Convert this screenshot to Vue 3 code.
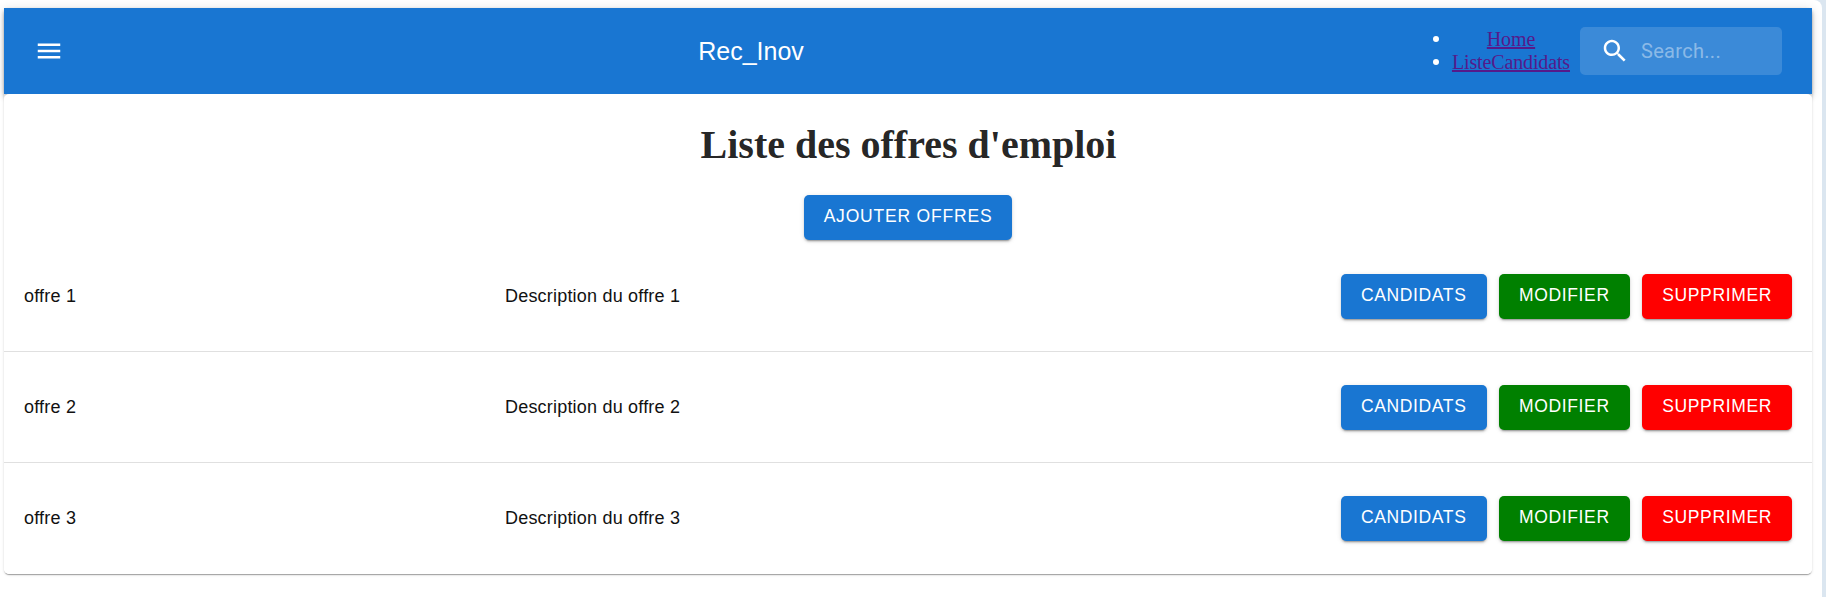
<script setup>
const offers = [1, 2, 3]
</script>

<template>
  <div class="page">
    <div class="paper">
      <header class="bar">
        <svg class="menu" viewBox="0 0 24 24"><path fill="#fff" d="M3 18h18v-2H3v2zm0-5h18v-2H3v2zm0-7v2h18V6H3z" /></svg>
        <div class="title">Rec_Inov</div>
        <ul class="links">
          <li><a href="#">Home</a></li>
          <li><a href="#">ListeCandidats</a></li>
        </ul>
        <div class="search">
          <svg class="glass" viewBox="0 0 24 24"><path fill="#fff" d="M15.5 14h-.79l-.28-.27C15.41 12.59 16 11.11 16 9.5 16 5.91 13.09 3 9.5 3S3 5.91 3 9.5 5.91 16 9.5 16c1.61 0 3.09-.59 4.23-1.57l.27.28v.79l5 4.99L20.49 19l-4.99-5zm-6 0C7.01 14 5 11.99 5 9.5S7.01 5 9.5 5 14 7.01 14 9.5 11.99 14 9.5 14z" /></svg>
          <span class="placeholder">Search...</span>
        </div>
      </header>
      <main class="content">
        <h1>Liste des offres d'emploi</h1>
        <div class="add"><button class="btn blue add-btn">Ajouter offres</button></div>
        <div class="table">
          <div v-for="n in offers" :key="n" class="row">
            <div>offre {{ n }}</div>
            <div>Description du offre {{ n }}</div>
            <div class="actions">
              <button class="btn blue">Candidats</button>
              <button class="btn green">Modifier</button>
              <button class="btn red">Supprimer</button>
            </div>
          </div>
        </div>
      </main>
    </div>
  </div>
</template>

<style>
html, body { margin: 0; background: #dbe6f0; overflow: hidden; }
</style>

<style scoped>
.page {
  width: 1822px;
  height: 597px;
  box-sizing: border-box;
  padding: 8px 10px 0 4px;
  background: #fff;
  border-top-right-radius: 8px;
  font-family: "Liberation Sans", Arial, sans-serif;
}
.paper {
  height: 566px;
  background: #fff;
  border-radius: 5px;
  box-shadow: 0 2px 1px -1px rgba(0,0,0,.2), 0 1px 1px 0 rgba(0,0,0,.14), 0 1px 3px 0 rgba(0,0,0,.12);
}
.bar {
  height: 86px;
  background: #1976d2;
  color: #fff;
  display: flex;
  align-items: center;
  padding: 0 30px;
  box-shadow: 0 2px 4px -1px rgba(0,0,0,.2), 0 4px 5px 0 rgba(0,0,0,.14), 0 1px 10px 0 rgba(0,0,0,.12);
}
.menu { width: 30px; height: 30px; flex: none; }
.title { flex: 1; text-align: center; font-size: 25px; line-height: 1.6; padding-left: 36px; }
.links {
  list-style: none;
  margin: 0 10px 0 0;
  padding: 0 0 0 50px;
  font-family: "Liberation Serif", serif;
  font-size: 20px;
  line-height: 23px;
  letter-spacing: -.14px;
  text-align: center;
}
.links li { position: relative; }
.links li::before {
  content: "";
  position: absolute;
  left: -19px;
  top: 8px;
  width: 6px;
  height: 6px;
  border-radius: 50%;
  background: #fff;
}
.links a { color: #551a8b; }
.search {
  width: 202px;
  height: 48px;
  box-sizing: border-box;
  border-radius: 5px;
  background: rgba(255,255,255,.15);
  display: flex;
  align-items: center;
  padding-left: 20px;
}
.glass { width: 30px; height: 30px; flex: none; }
.placeholder {
  margin-left: 11px;
  font-family: Roboto, sans-serif;
  font-size: 20px;
  letter-spacing: .3px;
  color: rgba(255,255,255,.42);
}
.content {
  position: relative;
  height: 480px;
  background: #fff;
  border-radius: 5px;
}
h1 {
  margin: 0;
  padding: 28px 0 0 1px;
  height: 73px;
  font-family: "Liberation Serif", serif;
  font-size: 40px;
  line-height: 46px;
  font-weight: 700;
  text-align: center;
  color: rgba(0,0,0,.87);
}
.add { display: flex; justify-content: center; margin-bottom: 1px; }
.btn {
  height: 45px;
  border: 0;
  border-radius: 5px;
  padding: 0 20px 2px;
  color: #fff;
  font-family: "Liberation Sans", Arial, sans-serif;
  font-size: 17.5px;
  font-weight: 500;
  letter-spacing: .64px;
  text-transform: uppercase;
  box-shadow: 0 3px 1px -2px rgba(0,0,0,.2), 0 2px 2px 0 rgba(0,0,0,.14), 0 1px 5px 0 rgba(0,0,0,.12);
}
.add-btn { letter-spacing: .8px; }
.blue { background: #1976d2; }
.green { background: green; }
.red { background: red; }
.row {
  display: grid;
  grid-template-columns: 481px 1fr auto;
  align-items: center;
  height: 111px;
  padding: 0 20px;
  font-size: 18px;
  letter-spacing: .2px;
  color: #111;
  border-bottom: 1px solid #e0e0e0;
  box-sizing: border-box;
}
.row:last-child { border-bottom: 0; }
.actions { display: flex; gap: 12.5px; }
</style>
